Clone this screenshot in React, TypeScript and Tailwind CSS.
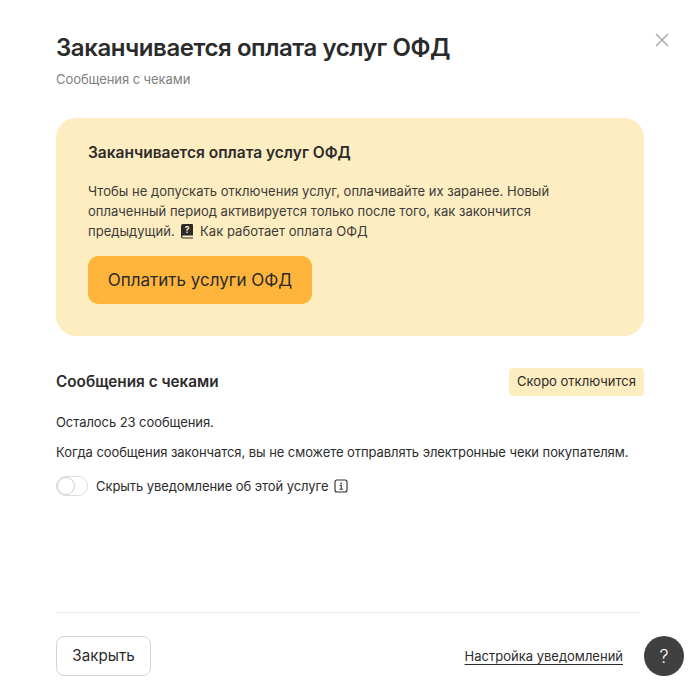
function CloseIcon() {
  return (
    <svg width="14" height="14" viewBox="0 0 14 14" fill="none" stroke="#a3a3a3" strokeWidth="1.3">
      <path d="M1 1l12 12M13 1L1 13" />
    </svg>
  );
}

function BookIcon() {
  return (
    <svg width="14" height="16" viewBox="0 0 14 16" className="inline-block align-[-3px]">
      <path
        d="M3 1h9a1 1 0 0 1 1 1v10.5H3.2a1 1 0 0 0 0 2H13V15.5H3a2 2 0 0 1-2-2V3a2 2 0 0 1 2-2z"
        fill="#2b2b2b"
      />
      <text x="7.2" y="10" fontSize="8.5" fontWeight="700" fill="#feedc0" textAnchor="middle" fontFamily="Inter, sans-serif">
        ?
      </text>
    </svg>
  );
}

function InfoIcon() {
  return (
    <svg width="14" height="14" viewBox="0 0 14 14" fill="none" stroke="#2b2b2b" strokeWidth="1.1">
      <rect x="1" y="1" width="12" height="12" rx="2" />
      <path d="M5.6 6.2H7.2V10.2M5.5 10.2H8.8" />
      <path d="M7.1 3.6v1.3" strokeWidth="1.3" />
    </svg>
  );
}

export default function App() {
  return (
    <div className="relative h-[700px] w-[700px] bg-white font-['Inter',sans-serif] text-[#2b2b2b] overflow-hidden">
      <button className="absolute left-[655px] top-[33px]">
        <CloseIcon />
      </button>

      <div className="flex h-full flex-col pl-[56px] pr-[56px]">
        <h1 className="mt-[32px] text-[24px] leading-[32px] font-semibold tracking-[-0.43px]">
          Заканчивается оплата услуг ОФД
        </h1>
        <p className="mt-[5px] text-[13px] leading-[20px] tracking-[-0.07px] text-[#808080]">Сообщения с чеками</p>

        <div className="mt-[29px] h-[218px] rounded-[20px] bg-[#feedc0] p-[32px] pt-[24px]">
          <h2 className="text-[15.5px] leading-[22px] font-semibold">Заканчивается оплата услуг ОФД</h2>
          <p className="mt-[17px] text-[13px] leading-[20px] tracking-[0.03px] text-[#3b3b3b]">
            Чтобы не допускать отключения услуг, оплачивайте их заранее. Новый
            <br />
            оплаченный период активируется только после того, как закончится
            <br />
            предыдущий. <span className="mx-[2px]"><BookIcon /></span> Как работает оплата ОФД
          </p>
          <button className="mt-[15px] h-[48px] w-[224px] rounded-[10px] bg-[#ffb53b] pt-[2px] text-[17px]">
            Оплатить услуги ОФД
          </button>
        </div>

        <div className="mt-[32px] flex items-center justify-between">
          <h3 className="text-[15.3px] leading-[22px] font-semibold">Сообщения с чеками</h3>
          <span className="flex h-[28px] w-[135px] items-center justify-center rounded-[4px] bg-[#feedc0] text-[13px]">
            Скоро отключится
          </span>
        </div>

        <p className="mt-[16px] text-[13px] leading-[20px] tracking-[-0.07px]">Осталось 23 сообщения.</p>
        <p className="mt-[10px] text-[13px] leading-[20px] tracking-[-0.07px] whitespace-nowrap">
          Когда сообщения закончатся, вы не сможете отправлять электронные чеки покупателям.
        </p>

        <div className="mt-[14px] flex items-center">
          <div className="flex h-[20px] w-[32px] items-center rounded-full border border-[#dcdcdc] bg-white">
            <div className="h-[18px] w-[18px] rounded-full border border-[#cfcfcf] bg-white" />
          </div>
          <span className="ml-[8px] text-[13px] leading-[20px] tracking-[-0.07px]">Скрыть уведомление об этой услуге</span>
          <span className="ml-[6px]"><InfoIcon /></span>
        </div>

        <div className="mt-auto mr-[4px] border-t border-[#ebebeb] pt-[23px] pb-[24px] pr-[17px] flex items-center justify-between">
          <button className="h-[40px] w-[95px] rounded-[8px] border border-[#d4d4d4] text-[15.2px]">Закрыть</button>
          <a className="text-[13px] leading-[20px] underline underline-offset-[3px]">Настройка уведомлений</a>
        </div>
      </div>

      <button className="absolute left-[644px] top-[636px] flex h-[40px] w-[40px] items-center justify-center rounded-full bg-[#404040] text-[18px] font-light text-white">
        ?
      </button>
    </div>
  );
}
